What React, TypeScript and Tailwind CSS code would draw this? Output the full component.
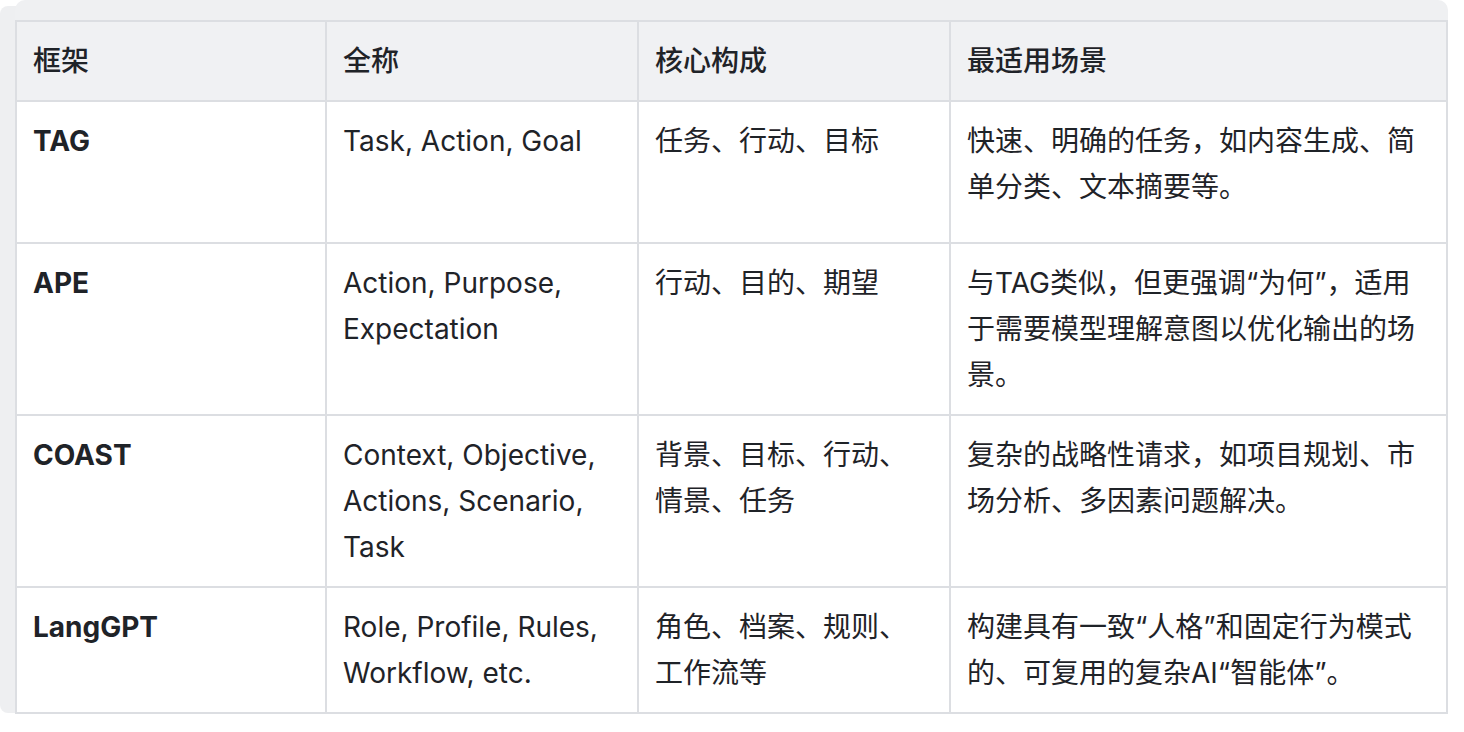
import React from 'react';

const rows = [
  {
    name: 'TAG',
    full: 'Task, Action, Goal',
    core: '任务、行动、目标',
    use: '快速、明确的任务，如内容生成、简单分类、文本摘要等。',
    h: 'h-[142px]',
  },
  {
    name: 'APE',
    full: 'Action, Purpose, Expectation',
    core: '行动、目的、期望',
    use: '与TAG类似，但更强调“为何”，适用于需要模型理解意图以优化输出的场景。',
    h: 'h-[172px]',
  },
  {
    name: 'COAST',
    full: 'Context, Objective, Actions, Scenario, Task',
    core: '背景、目标、行动、情景、任务',
    use: '复杂的战略性请求，如项目规划、市场分析、多因素问题解决。',
    h: 'h-[172px]',
  },
  {
    name: 'LangGPT',
    full: 'Role, Profile, Rules, Workflow, etc.',
    core: '角色、档案、规则、工作流等',
    use: '构建具有一致“人格”和固定行为模式的、可复用的复杂AI“智能体”。',
    h: 'h-[126px]',
  },
];

const cell = 'border-2 border-[#dcdee2] px-4 py-4 align-top text-left';

export default function App() {
  return (
    <div
      className="min-h-screen bg-white text-[28px] leading-[46px] text-[#1f2328]"
      style={{ fontFamily: 'Inter, "Noto Sans CJK SC", sans-serif' }}
    >
      <div className="flex w-[1448px]">
        {/* left gutter strip */}
        <div className="w-[16px] mt-[6px] h-[707px] bg-[#eeeff1] rounded-tl-[8px] rounded-bl-[8px] shrink-0" />
        <div className="flex-1 bg-[#eff0f2] rounded-t-[10px] pt-[20px] -ml-px">
          <table className="w-full table-fixed border-collapse bg-white">
            <colgroup>
              <col className="w-[310px]" />
              <col className="w-[312px]" />
              <col className="w-[312px]" />
              <col />
            </colgroup>
            <thead>
              <tr className="h-[80px] bg-[#f0f1f3]">
                <th className={`${cell} font-medium`}>框架</th>
                <th className={`${cell} font-medium`}>全称</th>
                <th className={`${cell} font-medium`}>核心构成</th>
                <th className={`${cell} font-medium`}>最适用场景</th>
              </tr>
            </thead>
            <tbody>
              {rows.map(r => (
                <tr key={r.name} className={r.h}>
                  <td className={`${cell} font-bold`}>{r.name}</td>
                  <td className={cell}>{r.full}</td>
                  <td className={cell}>{r.core}</td>
                  <td className={cell}>{r.use}</td>
                </tr>
              ))}
            </tbody>
          </table>
        </div>
      </div>
    </div>
  );
}
